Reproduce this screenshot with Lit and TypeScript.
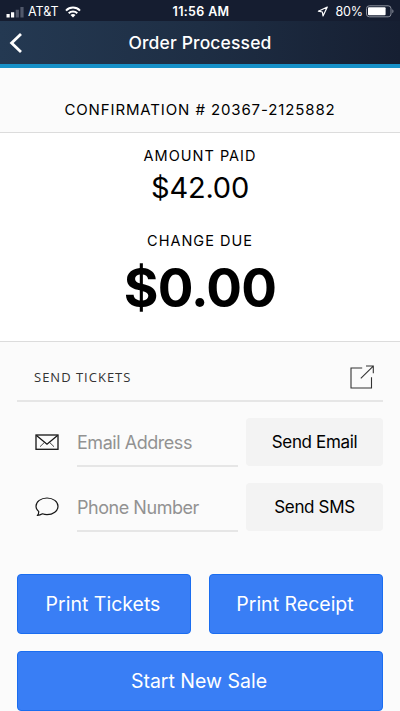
import { LitElement, html, css } from "lit";
import { customElement } from "lit/decorators.js";

@customElement("app-root")
export class AppRoot extends LitElement {
  static styles = css`
    :host {
      display: flex;
      flex-direction: column;
      width: 400px;
      height: 711px;
      overflow: hidden;
      background: #fbfbfb;
      color: #000;
      font-family: Inter, "Liberation Sans", sans-serif;
      white-space: nowrap;
    }
    * { box-sizing: border-box; }
    svg { display: block; fill: none; flex: none; }
    .status {
      display: grid;
      grid-template-columns: 1fr auto 1fr;
      align-items: center;
      height: 21px;
      padding: 2px 6px 0;
      background: #151d30;
      color: #fff;
      font-size: 12.5px;
      line-height: 18px;
    }
    .left, .right { display: flex; align-items: center; }
    .right { justify-content: flex-end; }
    .carrier { margin: 0 6px 0 4px; letter-spacing: 0; }
    .clock { font-weight: 600; letter-spacing: 0.35px; margin-left: 2px; }
    .percent { margin: 0 3px 0 7px; letter-spacing: -0.1px; }
    .nav {
      display: grid;
      grid-template-columns: 40px 1fr 40px;
      align-items: center;
      height: 47px;
      border-bottom: 4px solid #1791c8;
      background: linear-gradient(90deg, #243952, #1e2e44 50%, #161f32);
      color: #fff;
    }
    .back { margin-left: 9px; }
    h1 {
      margin: 0;
      text-align: center;
      font-size: 17.5px;
      line-height: 24px;
      font-weight: 500;
      letter-spacing: 0.15px;
    }
    .confirm {
      height: 65px;
      padding-top: 32px;
      border-bottom: 1px solid #dcdcdc;
      text-align: center;
      font-size: 15px;
      line-height: 20px;
      letter-spacing: 0.88px;
    }
    .totals {
      display: flex;
      flex-direction: column;
      align-items: center;
      height: 209px;
      padding-top: 13px;
      border-bottom: 1px solid #dcdcdc;
      background: #fff;
    }
    .label { font-size: 14.5px; line-height: 20px; letter-spacing: 1px; }
    .paid { margin-top: 4px; font-size: 29px; line-height: 36px; letter-spacing: -0.2px; }
    .due-label { margin-top: 25px; }
    .due {
      margin-top: 7px;
      font-size: 53px;
      line-height: 60px;
      font-weight: 700;
      letter-spacing: -0.8px;
    }
    .send { padding: 0 17px; }
    .send-head {
      display: flex;
      align-items: center;
      justify-content: space-between;
      height: 60px;
      padding: 11px 9px 0 17px;
      border-bottom: 2px solid #e6e6e6;
    }
    h2 {
      margin: 0;
      color: #333;
      font: 400 13px/20px "Open Sans", "Noto Sans", sans-serif;
      letter-spacing: 1px;
    }
    .row {
      display: grid;
      grid-template-columns: 60px 161px 137px;
      align-items: start;
      height: 49px;
      margin-top: 16px;
    }
    .row + .row { margin-top: 16px; }
    .row svg { margin: 15px 0 0 18px; }
    .row + .row svg { margin-top: 14px; }
    .field {
      height: 49px;
      border-bottom: 2px solid #e6e6e6;
      color: #929292;
      font-size: 18px;
      line-height: 49px;
      letter-spacing: -0.46px;
    }
    .gray {
      height: 48px;
      width: 137px;
      margin-left: 8px;
      border-radius: 4px;
      background: #f3f3f3;
      text-align: center;
      font-size: 17px;
      line-height: 49px;
      letter-spacing: -0.35px;
    }
    .actions {
      display: grid;
      grid-template-columns: 174px 174px;
      justify-content: space-between;
      row-gap: 17px;
      padding: 42px 17px 0;
    }
    .blue {
      height: 60px;
      border: 1px solid #1a6df0;
      border-radius: 4px;
      background: #397ef5;
      color: #fff;
      text-align: center;
      font-size: 19.5px;
      line-height: 59px;
    }
    .blue span { margin-right: 2px; }
    .wide { grid-column: 1 / -1; }
  `;

  private row(icon: unknown, placeholder: string, action: string) {
    return html`<div class="row">
      ${icon}
      <div class="field"><span>${placeholder}</span></div>
      <div class="gray" role="button"><span>${action}</span></div>
    </div>`;
  }

  render() {
    const mail = html`<svg width="24" height="18" viewBox="0 0 24 18" stroke="#151515">
      <rect x="1" y="2" width="22" height="14.3" stroke-width="1.3" />
      <path d="M1.5 2.5 12 11.2 22.5 2.5" stroke-width="1.3" />
      <path d="M5 13.7 9.3 9.5M19 13.7 14.7 9.5" stroke-width=".8" />
    </svg>`;
    const chat = html`<svg width="24" height="20" viewBox="0 0 24 20" stroke="#151515" stroke-width="1.2">
      <path d="M3.8 14.6C1.8 12.9 1 11 1 9.3 1 4.6 5.9 1 12 1s11 3.6 11 8.3-4.9 8.3-11 8.3c-1.7 0-3.1-.3-4.5-.8-1.6.9-3.1 1.5-5.2 1.7 1-.9 1.5-2.2 1.5-3.9Z" stroke-linejoin="round" />
    </svg>`;
    return html`
      <div class="status">
        <div class="left">
          <svg width="18" height="12" viewBox="0 0 18 12">
            <path d="M.5 8h3.2v3.5H.5zM5 6.2h3.2v5.3H5z" fill="#fff" />
            <path d="M9.7 3.8h3.2v7.7H9.7zM14.4 1h3.2v10.5h-3.2z" fill="#51586a" />
          </svg>
          <span class="carrier">AT&amp;T</span>
          <svg width="16" height="12" viewBox="0 0 16 12" stroke="#fff" stroke-width="2">
            <path d="M1 4.6C4.9.6 11.1.6 15 4.6M3.7 7.3c2.4-2.3 6.2-2.3 8.6 0" />
            <path d="M8 11.6 5.5 9c1.4-1.2 3.6-1.2 5 0z" fill="#fff" stroke="none" />
          </svg>
        </div>
        <span class="clock">11:56 AM</span>
        <div class="right">
          <svg width="11" height="11" viewBox="0 0 11 11" stroke="#fff" stroke-width="1.2" stroke-linejoin="round">
            <path d="M10.3 1 1.4 5.2l4 .8.6 4z" />
          </svg>
          <span class="percent">80%</span>
          <svg width="28" height="13" viewBox="0 0 28 13">
            <rect x=".5" y=".8" width="24.5" height="11" rx="2.8" stroke="#8b909c" />
            <rect x="2" y="2.3" width="17.6" height="8" rx="1" fill="#fff" />
            <path d="M26.3 4.3c1.6.6 1.6 3.4 0 4z" fill="#8b909c" />
          </svg>
        </div>
      </div>
      <div class="nav">
        <svg class="back" width="14" height="22" viewBox="0 0 14 22" stroke="#fff" stroke-width="2.8">
          <path d="M12 2 2.6 11 12 20" />
        </svg>
        <h1><span>Order Processed</span></h1>
      </div>
      <div class="confirm"><span>CONFIRMATION # 20367-2125882</span></div>
      <div class="totals">
        <span class="label">AMOUNT PAID</span>
        <span class="paid">$42.00</span>
        <span class="label due-label">CHANGE DUE</span>
        <span class="due">$0.00</span>
      </div>
      <div class="send">
        <div class="send-head">
          <h2>SEND TICKETS</h2>
          <svg width="24" height="24" viewBox="0 0 24 24" stroke="#333" stroke-width="1.1">
            <path d="M12.2 3H1v20H21.5V12.2M10.8 13.3 23 1.3M16 1h7.3v7.3" />
          </svg>
        </div>
        ${this.row(mail, "Email Address", "Send Email")}
        ${this.row(chat, "Phone Number", "Send SMS")}
      </div>
      <div class="actions">
        <div class="blue" role="button"><span>Print Tickets</span></div>
        <div class="blue" role="button"><span>Print Receipt</span></div>
        <div class="blue wide" role="button"><span>Start New Sale</span></div>
      </div>
    `;
  }
}
